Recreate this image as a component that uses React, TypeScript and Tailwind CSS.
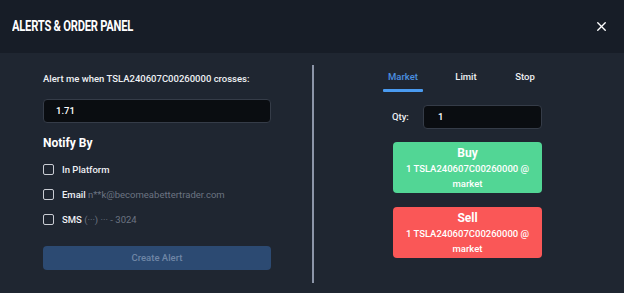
import { X } from 'lucide-react';

const font = { fontFamily: 'Roboto, "Liberation Sans", sans-serif' };

function Check({ label, extra }: { label: string; extra?: string }) {
  return (
    <label className="flex items-center gap-[8px] h-[11px]">
      <span className="w-[11px] h-[11px] rounded-[2px] border-[1.5px] border-[#c9ccd3] shrink-0" />
      <span className="text-[9.5px] font-medium text-[#eef0f4] leading-none">
        {label}
        {extra && <span className="font-normal text-[#6c7482]"> {extra}</span>}
      </span>
    </label>
  );
}

function OrderButton({ side, color }: { side: string; color: string }) {
  return (
    <button className={`w-[149px] h-[51px] rounded-[4px] ${color} flex flex-col items-center justify-center text-white`}>
      <span className="text-[12px] font-bold leading-[16px]">{side}</span>
      <span className="text-[9.5px] font-medium leading-[15px]">1 TSLA240607C00260000 @</span>
      <span className="text-[9.5px] font-medium leading-[15px]">market</span>
    </button>
  );
}

export default function App() {
  return (
    <div className="w-[624px] h-[293px] bg-[#1f2631] overflow-hidden" style={font}>
      <div className="h-[53px] bg-[#171d27] flex items-center justify-between pl-[12px] pr-[15px]">
        <h1 className="inline-block origin-left scale-x-[0.8] text-[14px] font-bold text-white tracking-[-0.3px]">
          ALERTS &amp; ORDER PANEL
        </h1>
        <X size={15} strokeWidth={2.2} className="text-white" />
      </div>
      <div className="flex h-[240px]">
        <div className="w-[312px] pl-[43px] pt-[20px]">
          <p className="text-[9.5px] font-medium text-[#eef0f4] leading-[12px]">
            Alert me when TSLA240607C00260000 crosses:
          </p>
          <div className="mt-[14px] w-[228px] h-[24px] rounded-[4px] bg-[#0a0d11] border border-[#353c48] flex items-center pl-[12px] text-[9.5px] font-medium text-white">
            1.71
          </div>
          <p className="mt-[13px] text-[12px] font-bold text-white leading-[14px]">Notify By</p>
          <div className="mt-[14px] flex flex-col gap-[14px]">
            <Check label="In Platform" />
            <Check label="Email" extra="n**k@becomeabettertrader.com" />
            <Check label="SMS" extra="(···) ··· - 3024" />
          </div>
          <button className="mt-[21px] w-[228px] h-[24px] rounded-[4px] bg-[#2c4a72] text-[9.5px] font-medium text-[#6f86a6]">
            Create Alert
          </button>
        </div>
        <div className="w-[2px] mt-[12px] h-[218px] bg-[#8c95a8]" />
        <div className="flex-1 flex flex-col items-start pt-[16px]">
          <div className="ml-[69px] flex items-start h-[24px]">
            <div className="w-[40px] flex flex-col items-center">
              <span className="text-[9.5px] font-medium text-[#4b8fe0] leading-[16px]">Market</span>
              <span className="mt-[4px] w-[40px] h-[3px] rounded-[1px] bg-[#4a9bf0]" />
            </div>
            <span className="ml-[23px] w-[40px] text-center text-[9.5px] font-medium text-[#eef0f4] leading-[16px]">Limit</span>
            <span className="ml-[19px] w-[40px] text-center text-[9.5px] font-medium text-[#eef0f4] leading-[16px]">Stop</span>
          </div>
          <div className="mt-[12px] ml-[78px] flex items-center gap-[14px]">
            <span className="w-[17px] text-[9.5px] font-medium text-[#eef0f4]">Qty:</span>
            <div className="w-[119px] h-[24px] rounded-[4px] bg-[#0a0d11] border border-[#353c48] flex items-center pl-[14px] text-[9.5px] font-medium text-white">
              1
            </div>
          </div>
          <div className="mt-[13px] ml-[79px] flex flex-col gap-[14px]">
            <OrderButton side="Buy" color="bg-[#52d695]" />
            <OrderButton side="Sell" color="bg-[#fa5757]" />
          </div>
        </div>
      </div>
    </div>
  );
}
